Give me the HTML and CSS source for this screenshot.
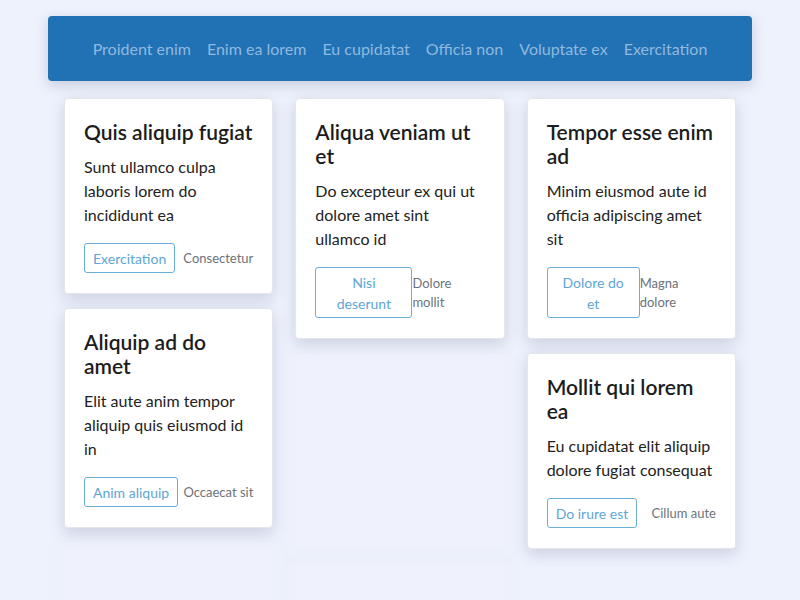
FILE: index.html
```html
<!DOCTYPE html>
<html lang="en">
<head>
<meta charset="utf-8">
<title>Cards</title>
<link rel="stylesheet" href="styles.css">
</head>
<body>
<div class="wrap">
  <nav class="nav">
    <a class="nav-link" href="#">Proident enim</a>
    <a class="nav-link" href="#">Enim ea lorem</a>
    <a class="nav-link" href="#">Eu cupidatat</a>
    <a class="nav-link" href="#">Officia non</a>
    <a class="nav-link" href="#">Voluptate ex</a>
    <a class="nav-link" href="#">Exercitation</a>
  </nav>
  <main class="grid">
    <div class="col">
      <article class="card">
        <h2 class="card-title">Quis aliquip fugiat</h2>
        <p class="card-text">Sunt ullamco culpa laboris lorem do incididunt ea</p>
        <div class="card-foot"><button class="btn">Exercitation</button><span class="meta">Consectetur</span></div>
      </article>
      <article class="card">
        <h2 class="card-title">Aliquip ad do amet</h2>
        <p class="card-text">Elit aute anim tempor aliquip quis eiusmod id in</p>
        <div class="card-foot"><button class="btn">Anim aliquip</button><span class="meta">Occaecat sit</span></div>
      </article>
      <div class="card ghost ghost-tall"></div>
    </div>
    <div class="col">
      <article class="card">
        <h2 class="card-title">Aliqua veniam ut et</h2>
        <p class="card-text">Do excepteur ex qui ut dolore amet sint ullamco id</p>
        <div class="card-foot"><button class="btn">Nisi deserunt</button><span class="meta">Dolore mollit</span></div>
      </article>
      <div class="card ghost ghost-mid"></div>
      <div class="card ghost ghost-tall"></div>
    </div>
    <div class="col">
      <article class="card">
        <h2 class="card-title">Tempor esse enim ad</h2>
        <p class="card-text">Minim eiusmod aute id officia adipiscing amet sit</p>
        <div class="card-foot"><button class="btn">Dolore do et</button><span class="meta">Magna dolore</span></div>
      </article>
      <article class="card">
        <h2 class="card-title">Mollit qui lorem ea</h2>
        <p class="card-text">Eu cupidatat elit aliquip dolore fugiat consequat</p>
        <div class="card-foot"><button class="btn">Do irure est</button><span class="meta">Cillum aute</span></div>
      </article>
    </div>
  </main>
</div>
</body>
</html>
```
FILE: styles.css
```css
* { box-sizing: border-box; }
html, body { margin: 0; padding: 0; }
body {
  background: #eef2fd;
  font-family: "Lato", "Liberation Sans", sans-serif;
  color: #212529;
  overflow: hidden;
  height: 600px;
}
.wrap {
  width: 704px;
  margin: 16px auto 0;
}
.nav {
  height: 65px;
  background: #2171b5;
  border-radius: 4px;
  box-shadow: 0 4px 14px rgba(40, 50, 90, 0.2);
  display: flex;
  align-items: center;
  justify-content: center;
  gap: 16px;
}
.nav-link {
  color: #90b9de;
  text-decoration: none;
  font-size: 16px;
  line-height: 20px;
}
.grid {
  margin-top: 17px;
  padding: 0 16px;
  display: grid;
  grid-template-columns: repeat(3, 1fr);
  column-gap: 22px;
  align-items: start;
}
.col {
  display: flex;
  flex-direction: column;
  gap: 14px;
}
.card {
  background: #fff;
  border-radius: 4px;
  border: 1px solid #e4e6ec;
  box-shadow: 0 5px 16px rgba(40, 50, 90, 0.18);
  padding: 21px 19px 20px;
}
.card.ghost {
  opacity: 0.06;
  padding: 0;
}
.ghost-mid { height: 195px; }
.ghost-tall { height: 220px; }
.card-title {
  margin: 0 0 11px;
  font-size: 21px;
  line-height: 24px;
  font-weight: 600;
  color: #1c1c1c;
}
.card-text {
  margin: 0 0 16px;
  font-size: 16px;
  line-height: 24px;
  color: #222;
}
.card-foot {
  display: flex;
  align-items: center;
  justify-content: space-between;
}
.btn {
  font-family: inherit;
  font-size: 14px;
  line-height: 21px;
  color: #5ea6d6;
  background: #fff;
  border: 1px solid #6aaed8;
  border-radius: 3px;
  padding: 3.5px 8px;
  text-align: center;
}
.meta {
  font-size: 13px;
  line-height: 19px;
  color: #6c737a;
}
```
